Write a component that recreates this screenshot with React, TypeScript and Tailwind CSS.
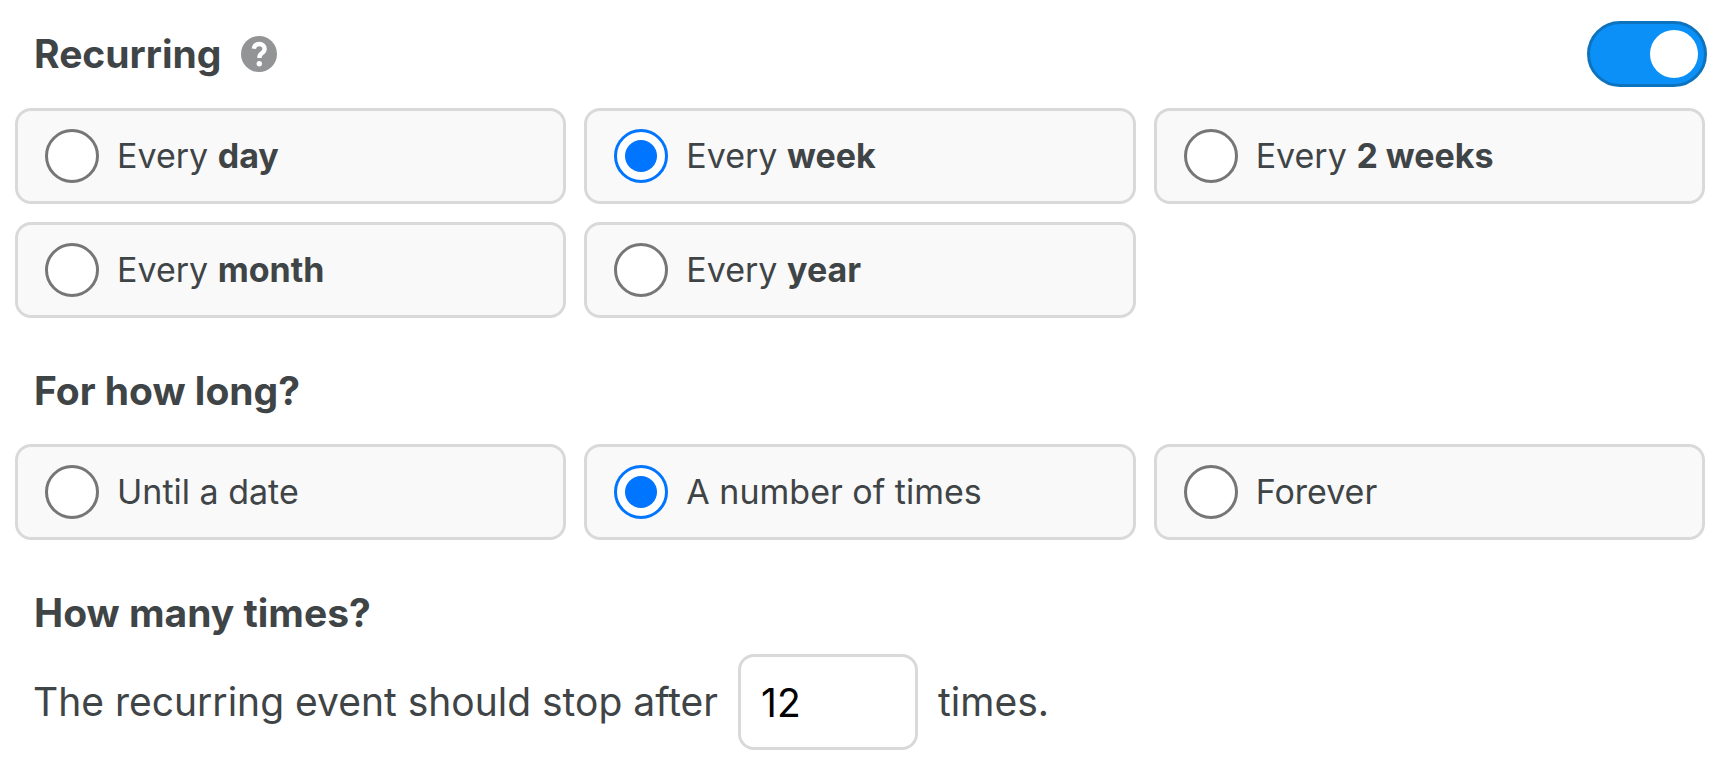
import { useState } from 'react';
import type { ReactNode } from 'react';

type Option = { value: string; label: ReactNode };

const frequencies: Option[] = [
  { value: 'day', label: <>Every <b className="font-bold">day</b></> },
  { value: 'week', label: <>Every <b className="font-bold">week</b></> },
  { value: '2weeks', label: <>Every <b className="font-bold">2 weeks</b></> },
  { value: 'month', label: <>Every <b className="font-bold">month</b></> },
  { value: 'year', label: <>Every <b className="font-bold">year</b></> },
];

const durations: Option[] = [
  { value: 'until', label: 'Until a date' },
  { value: 'count', label: 'A number of times' },
  { value: 'forever', label: 'Forever' },
];

function HelpIcon() {
  return (
    <svg viewBox="0 0 36 36" className="size-9" aria-hidden="true">
      <circle cx="18" cy="18" r="18" fill="#929495" />
      <path
        d="M12.9 12.8C13.3 9.7 15.2 8 18.2 8c3.2 0 5.4 1.9 5.4 4.8 0 2.2-1.2 3.4-2.8 4.5-1.6 1.1-2.4 2-2.4 4.6"
        fill="none"
        stroke="#fff"
        strokeWidth="4.4"
      />
      <circle cx="18.3" cy="27.8" r="2.7" fill="#fff" />
    </svg>
  );
}

type OptionGroupProps = {
  name: string;
  label: string;
  options: Option[];
  value: string;
  onChange: (value: string) => void;
};

function OptionGroup({ name, label, options, value, onChange }: OptionGroupProps) {
  return (
    <div role="radiogroup" aria-label={label} className="grid grid-cols-3 gap-[18px] pr-0.5">
      {options.map((option) => (
        <label
          key={option.value}
          className="flex h-24 items-center gap-[18px] rounded-2xl border-3 border-[#d9d9d9] bg-[#f9f9f9] px-[27px] text-[34px] leading-[48px]"
        >
          <input
            type="radio"
            name={name}
            value={option.value}
            checked={value === option.value}
            onChange={() => onChange(option.value)}
            className="grid size-[54px] shrink-0 appearance-none place-items-center rounded-full border-3 border-[#767676] bg-white before:size-8 before:rounded-full checked:border-[#0075ff] checked:before:bg-[#0075ff]"
          />
          <span>{option.label}</span>
        </label>
      ))}
    </div>
  );
}

export default function App() {
  const [recurring, setRecurring] = useState(true);
  const [frequency, setFrequency] = useState('week');
  const [duration, setDuration] = useState('count');
  const [times, setTimes] = useState('12');

  return (
    <main className="bg-white pt-[21px] pr-[18px] pb-3 pl-[15px] font-['Inter','Liberation_Sans',sans-serif] text-[#3f4446]">
      <div className="mb-[21px] flex items-center justify-between pl-[19px]">
        <div className="flex items-center gap-5">
          <h2 id="recurring" className="text-[39px] leading-[60px] font-bold">Recurring</h2>
          <button type="button" aria-label="Help">
            <HelpIcon />
          </button>
        </div>
        <button
          type="button"
          role="switch"
          aria-checked={recurring}
          aria-labelledby="recurring"
          onClick={() => setRecurring(!recurring)}
          className="flex h-[66px] w-[120px] items-center justify-start rounded-full border-3 border-[#b5b5b5] bg-[#d9d9d9] px-1.5 aria-checked:justify-end aria-checked:border-[#0d73be] aria-checked:bg-[#0a90f7]"
        >
          <span className="size-12 rounded-full bg-white" />
        </button>
      </div>
      <OptionGroup name="frequency" label="Recurring" options={frequencies} value={frequency} onChange={setFrequency} />

      <h2 className="mt-[43px] mb-[23px] pl-[19px] text-[39px] leading-[60px] font-bold">For how long?</h2>
      <OptionGroup name="duration" label="For how long?" options={durations} value={duration} onChange={setDuration} />

      <h2 className="mt-[43px] mb-[11px] pl-[19px] text-[39px] leading-[60px] font-bold">How many times?</h2>
      <div className="flex items-center gap-5 pl-[18px] text-[39px] leading-[60px]">
        <label htmlFor="times">The recurring event should stop after</label>
        <input
          id="times"
          type="text"
          inputMode="numeric"
          value={times}
          onChange={(e) => setTimes(e.target.value)}
          className="h-24 w-[180px] rounded-2xl border-3 border-[#d9d9d9] bg-white px-5 text-black"
        />
        <span>times.</span>
      </div>
    </main>
  );
}
